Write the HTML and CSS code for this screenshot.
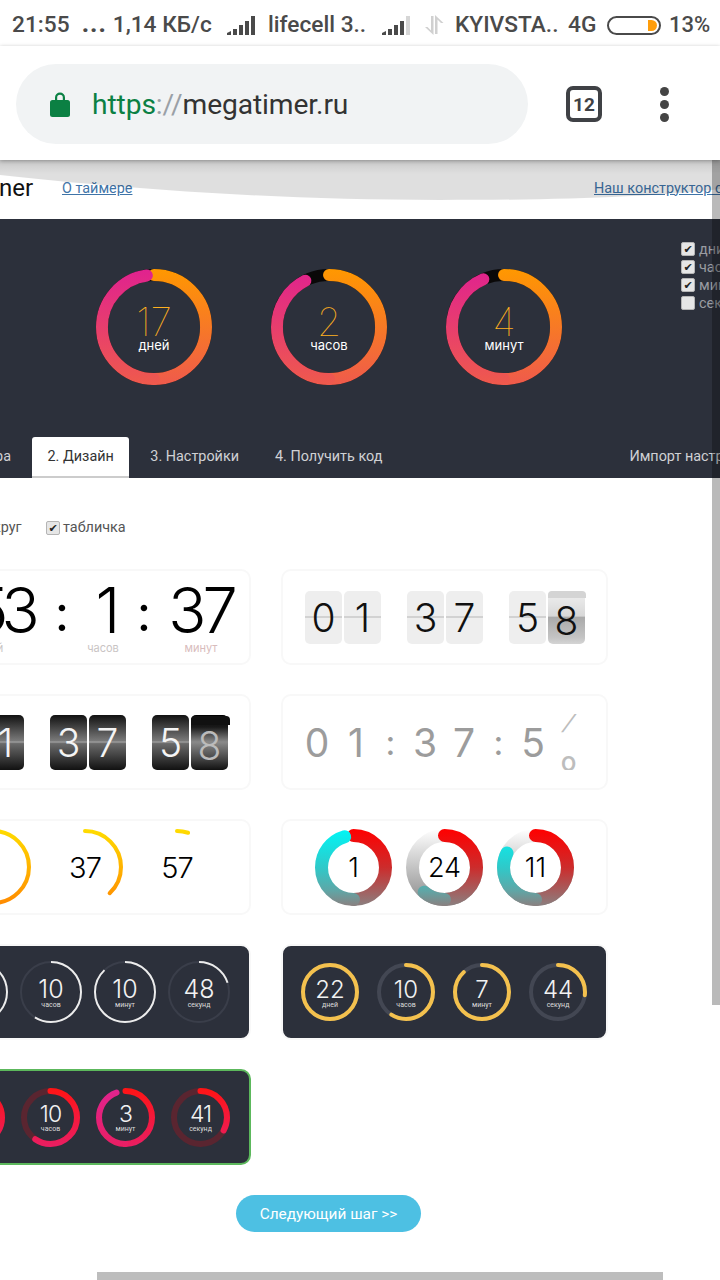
FILE: index.html
```html
<!DOCTYPE html>
<html lang="ru">
<head>
<meta charset="utf-8">
<title>megatimer.ru</title>
<link rel="stylesheet" href="styles.css">
</head>
<body>
<svg class="defs" width="0" height="0" aria-hidden="true">
  <defs>
    <linearGradient id="heroR" gradientUnits="userSpaceOnUse" x1="100" y1="0" x2="0" y2="0"><stop offset="0" stop-color="#ff9800"/><stop offset="1" stop-color="#ef5a4c"/></linearGradient>
    <linearGradient id="heroL" gradientUnits="userSpaceOnUse" x1="100" y1="0" x2="0" y2="0"><stop offset="0" stop-color="#e0228f"/><stop offset="1" stop-color="#ef5a4c"/></linearGradient>
    <linearGradient id="yellow" gradientUnits="userSpaceOnUse" x1="100" y1="0" x2="0" y2="0"><stop offset="0" stop-color="#ffdc00"/><stop offset="1" stop-color="#ff8a00"/></linearGradient>
    <linearGradient id="mixR" gradientUnits="userSpaceOnUse" x1="100" y1="0" x2="0" y2="0"><stop offset="0" stop-color="#ff0000"/><stop offset=".5" stop-color="#cc2c2c"/><stop offset="1" stop-color="#8a8080"/></linearGradient>
    <linearGradient id="mixL" gradientUnits="userSpaceOnUse" x1="100" y1="0" x2="0" y2="0"><stop offset="0" stop-color="#00f6f6"/><stop offset=".5" stop-color="#2fc9c9"/><stop offset=".8" stop-color="#5fa6a6"/><stop offset="1" stop-color="#8a8080"/></linearGradient>
    <linearGradient id="mixT" gradientUnits="userSpaceOnUse" x1="100" y1="0" x2="0" y2="0"><stop offset="0" stop-color="#ffffff"/><stop offset="1" stop-color="#888888"/></linearGradient>
    <linearGradient id="redR" gradientUnits="userSpaceOnUse" x1="100" y1="0" x2="0" y2="0"><stop offset="0" stop-color="#ff1414"/><stop offset="1" stop-color="#e91e63"/></linearGradient>
    <linearGradient id="redL" gradientUnits="userSpaceOnUse" x1="100" y1="0" x2="0" y2="0"><stop offset="0" stop-color="#e0248f"/><stop offset="1" stop-color="#e91e63"/></linearGradient>
  </defs>
</svg>

<div class="screen">
  <div class="statusbar">
    <span class="st st-time">21:55</span>
    <span class="st st-speed"><b class="st-dots">...</b> 1,14 КБ/с</span>
    <svg class="sig" viewBox="0 0 30 20"><path class="bar" d="M1 20v-2l4-2v4zM7 20v-6h4v6zM13 20v-10h4v10zM19 20v-14h4v14zM25 20v-19h4v19z"/></svg>
    <span class="st st-carrier">lifecell 3..</span>
    <svg class="sig" viewBox="0 0 30 20"><path class="bar" d="M1 20v-2l4-2v4zM7 20v-6h4v6zM13 20v-10h4v10zM19 20v-14h4v14z"/><path class="bar-off" d="M25 20v-19h4v19z"/></svg>
    <svg class="arrows" viewBox="0 0 22 20"><path d="M8 1h2.500v19L2 12h2.500l3.500 3.500zM12 0l8.500 8H18l-3.500-3.500V19H12z"/></svg>
    <span class="st st-kyiv">KYIVSTA..</span>
    <span class="st st-net">4G</span>
    <div class="battery"><span class="battery-level"></span></div>
    <span class="st st-pct">13%</span>
  </div>

  <div class="toolbar">
    <div class="omnibox">
      <svg class="lock" viewBox="0 0 20 26"><path d="M5 10V6.500a5 5 0 0 1 10 0V10h-2.200V6.500a2.800 2.800 0 0 0-5.600 0V10z"/><rect y="9" width="20" height="17" rx="2.500"/></svg>
      <span class="url"><span class="url-https">https</span><span class="url-sep">://</span>megatimer.ru</span>
    </div>
    <div class="tabs-count">12</div>
    <div class="menu"><i></i><i></i><i></i></div>
  </div>

  <div class="page">
    <header class="site-head">
      <span class="logo">ner</span>
      <a class="link link-about">О таймере</a>
      <a class="link link-builder">Наш конструктор счётчиков</a>
    </header>

    <section class="hero">
      <div class="hero-row">
        <div class="ring ring-hero">
          <svg viewBox="0 0 100 100"><circle class="sw-hero" r="44.850" cx="50" cy="50" pathLength="100" stroke="#0a0808"/><circle class="sw-hero arc" r="44.850" cx="50" cy="50" pathLength="100" stroke="url(#heroR)" stroke-dasharray="50 100"/><circle class="sw-hero arc" r="44.850" cx="50" cy="50" pathLength="100" stroke="url(#heroL)" stroke-dasharray="47.800 100" stroke-dashoffset="-50"/></svg>
          <div class="ring-text"><b class="hero-num">17</b><small class="hero-lab">дней</small></div>
        </div>
        <div class="ring ring-hero">
          <svg viewBox="0 0 100 100"><circle class="sw-hero" r="44.850" cx="50" cy="50" pathLength="100" stroke="#0a0808"/><circle class="sw-hero arc" r="44.850" cx="50" cy="50" pathLength="100" stroke="url(#heroR)" stroke-dasharray="50 100"/><circle class="sw-hero arc" r="44.850" cx="50" cy="50" pathLength="100" stroke="url(#heroL)" stroke-dasharray="42.500 100" stroke-dashoffset="-50"/></svg>
          <div class="ring-text"><b class="hero-num">2</b><small class="hero-lab">часов</small></div>
        </div>
        <div class="ring ring-hero">
          <svg viewBox="0 0 100 100"><circle class="sw-hero" r="44.850" cx="50" cy="50" pathLength="100" stroke="#0a0808"/><circle class="sw-hero arc" r="44.850" cx="50" cy="50" pathLength="100" stroke="url(#heroR)" stroke-dasharray="50 100"/><circle class="sw-hero arc" r="44.850" cx="50" cy="50" pathLength="100" stroke="url(#heroL)" stroke-dasharray="43.500 100" stroke-dashoffset="-50"/></svg>
          <div class="ring-text"><b class="hero-num">4</b><small class="hero-lab">минут</small></div>
        </div>
        <ul class="units">
          <li><span class="check on"></span>дни</li>
          <li><span class="check on"></span>часов</li>
          <li><span class="check on"></span>минут</li>
          <li><span class="check"></span>секунд</li>
        </ul>
      </div>
      <nav class="tabs">
        <span class="tab tab-first">1. Таймера</span>
        <span class="tab tab-active">2. Дизайн</span>
        <span class="tab">3. Настройки</span>
        <span class="tab">4. Получить код</span>
        <span class="tab tab-import">Импорт настроек</span>
      </nav>
    </section>

    <div class="options">
      <span class="opt-clipped">круг</span>
      <span class="check on check-light"></span><span>табличка</span>
    </div>

    <div class="cards">
      <div class="card card-digits">
        <div class="dg dg-first"><b>153</b><small>дней</small></div>
        <div class="dg-colon">:</div>
        <div class="dg dg-mid"><b>1</b><small>часов</small></div>
        <div class="dg-colon">:</div>
        <div class="dg dg-end"><b>37</b><small class="dg-pink">минут</small></div>
      </div>

      <div class="card card-flip flip-light">
        <div class="flip-group"><span class="tile">0</span><span class="tile">1</span></div>
        <div class="flip-group"><span class="tile">3</span><span class="tile">7</span></div>
        <div class="flip-group"><span class="tile">5</span><span class="tile tile-turn">8</span></div>
      </div>

      <div class="card card-flip flip-dark">
        <div class="flip-group"><span class="tile">0</span><span class="tile">1</span></div>
        <div class="flip-group"><span class="tile">3</span><span class="tile">7</span></div>
        <div class="flip-group"><span class="tile">5</span><span class="tile tile-turn">8</span></div>
      </div>

      <div class="card card-grey">
        <span class="gd">0</span><span class="gd">1</span><span class="gc">:</span>
        <span class="gd">3</span><span class="gd">7</span><span class="gc">:</span>
        <span class="gd">5</span>
        <span class="gd gd-roll"><i class="roll-top">/</i><i class="roll-bottom">o</i></span>
      </div>

      <div class="card card-rings card-yellow">
        <div class="ring ring-yellow">
          <svg viewBox="0 0 100 100"><circle class="sw-yellow arc" r="47.350" cx="50" cy="50" pathLength="100" stroke="url(#yellow)" stroke-dasharray="70 100"/></svg>
          <div class="ring-text"><b class="n-yellow">1</b></div>
        </div>
        <div class="ring ring-yellow">
          <svg viewBox="0 0 100 100"><circle class="sw-yellow arc" r="47.350" cx="50" cy="50" pathLength="100" stroke="url(#yellow)" stroke-dasharray="38 100"/></svg>
          <div class="ring-text"><b class="n-yellow">37</b></div>
        </div>
        <div class="ring ring-yellow">
          <svg viewBox="0 0 100 100"><circle class="sw-yellow arc" r="47.350" cx="50" cy="50" pathLength="100" stroke="url(#yellow)" stroke-dasharray="5 100"/></svg>
          <div class="ring-text"><b class="n-yellow">57</b></div>
        </div>
      </div>

      <div class="card card-rings card-mix">
        <div class="ring ring-mix">
          <svg viewBox="0 0 100 100"><circle class="sw-mix arc" r="41.550" cx="50" cy="50" pathLength="100" stroke="url(#mixR)" stroke-dasharray="50 100"/><circle class="sw-mix arc" r="41.550" cx="50" cy="50" pathLength="100" stroke="url(#mixL)" stroke-dasharray="45.500 100" stroke-dashoffset="-50"/></svg>
          <div class="ring-text"><b class="n-mix">1</b></div>
        </div>
        <div class="ring ring-mix">
          <svg viewBox="0 0 100 100"><circle class="sw-mix" r="41.550" cx="50" cy="50" pathLength="100" stroke="url(#mixT)"/><circle class="sw-mix arc" r="41.550" cx="50" cy="50" pathLength="100" stroke="url(#mixR)" stroke-dasharray="50 100"/><circle class="sw-mix arc" r="41.550" cx="50" cy="50" pathLength="100" stroke="url(#mixL)" stroke-dasharray="11 100" stroke-dashoffset="-50"/></svg>
          <div class="ring-text"><b class="n-mix">24</b></div>
        </div>
        <div class="ring ring-mix">
          <svg viewBox="0 0 100 100"><circle class="sw-mix" r="41.550" cx="50" cy="50" pathLength="100" stroke="url(#mixT)"/><circle class="sw-mix arc" r="41.550" cx="50" cy="50" pathLength="100" stroke="url(#mixR)" stroke-dasharray="50 100"/><circle class="sw-mix arc" r="41.550" cx="50" cy="50" pathLength="100" stroke="url(#mixL)" stroke-dasharray="32.500 100" stroke-dashoffset="-50"/></svg>
          <div class="ring-text"><b class="n-mix">11</b></div>
        </div>
      </div>

      <div class="card card-dark card-white">
        <div class="ring ring-thin">
          <svg viewBox="0 0 100 100"><circle class="sw-thin track-white" r="48.400" cx="50" cy="50" pathLength="100"/><circle class="sw-thin arc-white" r="48.400" cx="50" cy="50" pathLength="100" stroke-dasharray="37 100"/></svg>
          <div class="ring-text"><b class="n-thin">22</b><small class="l-dark">дней</small></div>
        </div>
        <div class="ring ring-thin">
          <svg viewBox="0 0 100 100"><circle class="sw-thin track-white" r="48.400" cx="50" cy="50" pathLength="100"/><circle class="sw-thin arc-white" r="48.400" cx="50" cy="50" pathLength="100" stroke-dasharray="59 100"/></svg>
          <div class="ring-text"><b class="n-thin">10</b><small class="l-dark">часов</small></div>
        </div>
        <div class="ring ring-thin">
          <svg viewBox="0 0 100 100"><circle class="sw-thin track-white" r="48.400" cx="50" cy="50" pathLength="100"/><circle class="sw-thin arc-white" r="48.400" cx="50" cy="50" pathLength="100" stroke-dasharray="88 100"/></svg>
          <div class="ring-text"><b class="n-thin">10</b><small class="l-dark">минут</small></div>
        </div>
        <div class="ring ring-thin">
          <svg viewBox="0 0 100 100"><circle class="sw-thin track-white" r="48.400" cx="50" cy="50" pathLength="100"/><circle class="sw-thin arc-white" r="48.400" cx="50" cy="50" pathLength="100" stroke-dasharray="20 100"/></svg>
          <div class="ring-text"><b class="n-thin">48</b><small class="l-dark">секунд</small></div>
        </div>
      </div>

      <div class="card card-dark card-gold">
        <div class="ring ring-gold">
          <svg viewBox="0 0 100 100"><circle class="sw-gold track-gold" r="46.550" cx="50" cy="50" pathLength="100"/><circle class="sw-gold arc arc-gold" r="46.550" cx="50" cy="50" pathLength="100"/></svg>
          <div class="ring-text"><b class="n-gold">22</b><small class="l-dark">дней</small></div>
        </div>
        <div class="ring ring-gold">
          <svg viewBox="0 0 100 100"><circle class="sw-gold track-gold" r="46.550" cx="50" cy="50" pathLength="100"/><circle class="sw-gold arc arc-gold" r="46.550" cx="50" cy="50" pathLength="100" stroke-dasharray="59 100"/></svg>
          <div class="ring-text"><b class="n-gold">10</b><small class="l-dark">часов</small></div>
        </div>
        <div class="ring ring-gold">
          <svg viewBox="0 0 100 100"><circle class="sw-gold track-gold" r="46.550" cx="50" cy="50" pathLength="100"/><circle class="sw-gold arc arc-gold" r="46.550" cx="50" cy="50" pathLength="100" stroke-dasharray="88 100"/></svg>
          <div class="ring-text"><b class="n-gold">7</b><small class="l-dark">минут</small></div>
        </div>
        <div class="ring ring-gold">
          <svg viewBox="0 0 100 100"><circle class="sw-gold track-gold" r="46.550" cx="50" cy="50" pathLength="100"/><circle class="sw-gold arc arc-gold" r="46.550" cx="50" cy="50" pathLength="100" stroke-dasharray="27 100"/></svg>
          <div class="ring-text"><b class="n-gold">44</b><small class="l-dark">секунд</small></div>
        </div>
      </div>

      <div class="card card-dark card-red">
        <div class="ring ring-red">
          <svg viewBox="0 0 100 100"><circle class="sw-red track-red" r="44.900" cx="50" cy="50" pathLength="100"/><circle class="sw-red arc" r="44.900" cx="50" cy="50" pathLength="100" stroke="url(#redR)" stroke-dasharray="50 100"/></svg>
          <div class="ring-text"><b class="n-red">22</b><small class="l-red">дней</small></div>
        </div>
        <div class="ring ring-red">
          <svg viewBox="0 0 100 100"><circle class="sw-red track-red" r="44.900" cx="50" cy="50" pathLength="100"/><circle class="sw-red arc" r="44.900" cx="50" cy="50" pathLength="100" stroke="url(#redR)" stroke-dasharray="59.500 100"/></svg>
          <div class="ring-text"><b class="n-red">10</b><small class="l-red">часов</small></div>
        </div>
        <div class="ring ring-red">
          <svg viewBox="0 0 100 100"><circle class="sw-red arc" r="44.900" cx="50" cy="50" pathLength="100" stroke="url(#redR)" stroke-dasharray="50 100"/><circle class="sw-red arc" r="44.900" cx="50" cy="50" pathLength="100" stroke="url(#redL)" stroke-dasharray="44 100" stroke-dashoffset="-50"/></svg>
          <div class="ring-text"><b class="n-red">3</b><small class="l-red">минут</small></div>
        </div>
        <div class="ring ring-red">
          <svg viewBox="0 0 100 100"><circle class="sw-red track-red" r="44.900" cx="50" cy="50" pathLength="100"/><circle class="sw-red arc" r="44.900" cx="50" cy="50" pathLength="100" stroke="url(#redR)" stroke-dasharray="33 100"/></svg>
          <div class="ring-text"><b class="n-red">41</b><small class="l-red">секунд</small></div>
        </div>
      </div>
    </div>

    <div class="actions"><button class="next">Следующий шаг &gt;&gt;</button></div>

    <svg class="glow" viewBox="0 0 720 40" preserveAspectRatio="none"><path d="M0 15C120 28 270 40 440 40C560 40 650 37 720 29V0H0z"/></svg>
    <div class="glow-shade"></div>
    <div class="scroll-v"></div>
    <div class="scroll-h"></div>
  </div>
</div>
</body>
</html>
```

FILE: styles.css
```css
* { box-sizing: border-box; }
html, body { margin: 0; padding: 0; background: #fff; }
body { font-family: "Roboto", "Liberation Sans", sans-serif; }
.defs { position: absolute; }

.screen { width: 720px; height: 1280px; overflow: hidden; display: flex; flex-direction: column; }

/* status bar */
.statusbar { height: 46px; flex: none; padding: 4px 0 0 12px; display: flex; align-items: center; background: #fff; color: #4a4a4a; white-space: nowrap; }
.st { font-size: 22.700px; font-weight: 500; line-height: 1; flex: none; }
.st-time { width: 70px; }
.st-speed { width: 144px; }
.st-dots { font-weight: 900; letter-spacing: 1.500px; }
.sig { width: 30px; height: 20px; margin-right: 12px; flex: none; }
.bar { fill: #4a4a4a; }
.bar-off { fill: #d6d6d6; }
.st-carrier { width: 113px; }
.arrows { width: 22px; height: 20px; margin-right: 10px; fill: #d0d0d0; flex: none; }
.st-kyiv { width: 113px; }
.st-net { width: 39px; }
.battery { width: 54px; height: 19px; margin-right: 8px; border: 2px solid #4a4a4a; border-radius: 10px; display: flex; justify-content: flex-end; padding: 2px; flex: none; }
.battery-level { width: 9px; background: #ff9d0a; border-radius: 0 7px 7px 0; }
.st-pct { font-size: 22px; }

/* browser toolbar */
.toolbar { height: 114px; flex: none; display: flex; align-items: center; padding: 2px 0 0 16px; background: #fff; position: relative; z-index: 3; box-shadow: 0 1px 4px rgba(0,0,0,.3); }
.omnibox { width: 512px; height: 80px; border-radius: 40px; background: #f1f3f4; display: flex; align-items: center; padding-left: 34px; flex: none; }
.lock { width: 20px; height: 26px; fill: #0b8043; margin-right: 22px; flex: none; }
.url { font-size: 28.200px; color: #333; letter-spacing: -.1px; padding-top: 1px; }
.url-https { color: #0b8043; }
.url-sep { color: #9aa0a6; }
.tabs-count { width: 36px; height: 36px; margin-left: 38px; border: 4px solid #3f4145; border-radius: 7px; display: flex; align-items: center; justify-content: center; font-size: 19px; font-weight: 700; color: #3f4145; flex: none; }
.menu { margin-left: 58px; display: flex; flex-direction: column; gap: 4px; flex: none; }
.menu i { width: 9px; height: 9px; border-radius: 50%; background: #444; display: block; }

/* page */
.page { flex: 1; position: relative; overflow: hidden; background: #fff; }
.site-head { height: 59px; display: flex; align-items: center; padding-bottom: 3px; white-space: nowrap; }
.logo { font-size: 24px; color: #111; margin-left: -1px; width: 63px; flex: none; }
.link { font-size: 14.400px; color: #3f74a8; text-decoration: underline; flex: none; }
.link-about { width: 532px; }

.hero { height: 259px; background: #2c303b; display: flex; flex-direction: column; }
.hero-row { height: 218px; padding: 21px 0 0 96px; display: flex; gap: 59px; align-items: flex-start; white-space: nowrap; }
.ring { position: relative; flex: none; }
.ring svg { display: block; width: 100%; height: 100%; overflow: visible; }
.ring circle { fill: none; }
.ring svg circle { transform: rotate(-90deg); transform-origin: 50px 50px; }
.arc { stroke-linecap: round; }
.ring-text { position: absolute; inset: 0; display: flex; flex-direction: column; align-items: center; justify-content: center; }
.ring-text b, .ring-text small { display: block; line-height: 1; font-weight: 400; }

.ring-hero { width: 116px; height: 116px; margin-top: 29px; }
.sw-hero { stroke-width: 10.300; }
.ring-text .hero-num { font-family: "Inter", sans-serif; font-size: 39px; font-weight: 100; color: #ffb020; }
.hero-lab { font-family: "Inter", sans-serif; font-size: 13px; color: #fff; margin-top: -2px; }

.units { list-style: none; margin: 0 0 0 60px; padding: 0; font-size: 14.400px; color: #9a9ca2; display: flex; flex-direction: column; flex: none; }
.units li { height: 18px; display: flex; align-items: center; gap: 4px; }
.check { width: 14px; height: 14px; flex: none; border-radius: 2px; background: #e6e6e6; border: 1px solid #b5b5b5; display: inline-flex; align-items: center; justify-content: center; font-size: 11px; color: #222; line-height: 1; }
.check.on::before { content: "✔"; font-family: "DejaVu Sans", sans-serif; }

.tabs { height: 41px; display: flex; gap: 6px; font-size: 14.400px; color: #d0d1d4; white-space: nowrap; }
.tab { padding: 0 15px; line-height: 39px; flex: none; }
.tab-first { width: 100px; margin-left: -74px; padding: 0 15px 0 0; text-align: right; overflow: hidden; }
.tab-active { background: #fff; color: #333; border-radius: 3px 3px 0 0; border-bottom: 2px solid #ccc; padding: 0 15.500px; }
.tab-import { margin-left: 211px; }

.options { height: 91px; padding-top: 41px; display: flex; align-items: flex-start; font-size: 14.400px; line-height: 18px; color: #555; gap: 3px; white-space: nowrap; }
.opt-clipped { margin-left: -7px; width: 50px; flex: none; }
.check-light { margin-top: 2px; }

/* cards */
.cards { margin-left: -76px; display: grid; grid-template-columns: 327px 327px; grid-auto-rows: 96px; column-gap: 30px; row-gap: 29px; }
.card { border: 2px solid #f8f8f8; border-radius: 10px; background: #fff; display: flex; align-items: center; }

.card-digits { padding-left: 8px; align-items: flex-start; padding-top: 8px; color: #000; font-family: "Inter", sans-serif; }
.dg { width: 112px; text-align: center; display: flex; flex-direction: column; align-items: center; flex: none; white-space: nowrap; }
.dg-mid { width: 50px; }
.dg-end { width: 82px; }
.dg b { font-size: 63px; font-weight: 300; line-height: 62px; letter-spacing: -4px; }
.dg-first b { letter-spacing: -7px; margin-left: 6px; }
.dg-mid b { padding-left: 6px; }
.dg small { font-size: 11px; color: #c9c4c4; line-height: 13px; margin-top: 1px; }
.dg small.dg-pink { color: #d8bcbc; }
.dg-colon { width: 32px; text-align: center; font-size: 50px; font-weight: 400; line-height: 68px; flex: none; }

.card-flip { padding-left: 22px; gap: 26px; font-family: "Inter", sans-serif; }
.flip-group { display: flex; gap: 2px; flex: none; }
.tile { width: 37px; height: 53px; border-radius: 5px; display: flex; align-items: center; justify-content: center; font-size: 39px; font-weight: 300; position: relative; }
.flip-light .tile { background: linear-gradient(#eee 0 47%, #d2d2d2 47% 51%, #eee 51%); color: #111; }
.flip-light .tile-turn { background: linear-gradient(#eaeaea 12%, #d8d8d8 47%, #aaa 50%, #c4c4c4 88%, #d4d4d4 100%); padding-top: 7px; }
.flip-light .tile-turn::before { content: ""; position: absolute; left: 0; right: -1px; top: 0; height: 7px; background: #d4d4d4; border-radius: 4px 4px 0 0; }
.flip-dark .tile { height: 55px; background: linear-gradient(#111 0, #7a7a7a 47%, #a0a0a0 49%, #6a6a6a 52%, #111 100%); color: #f4f4f4; }
.flip-dark .tile-turn { background: linear-gradient(#000 0, #1a1a1a 22%, #8a8a8a 49%, #444 80%, #111 100%); color: #bbb; padding-top: 6px; }
.flip-dark .tile-turn::before { content: ""; position: absolute; left: 0; right: -2px; top: 1px; height: 9px; background: #111; border-radius: 4px 4px 0 0; }

.card-grey { padding-left: 14.500px; font-family: "Inter", sans-serif; color: #9c9c9c; }
.gd { width: 39px; text-align: center; font-size: 39px; font-weight: 400; flex: none; }
.gc { width: 30px; text-align: center; font-size: 34px; font-weight: 400; flex: none; }
.gd-roll { height: 56px; padding-right: 7px; display: flex; flex-direction: column; align-items: center; justify-content: space-between; color: #bdbdbd; overflow: hidden; }
.gd-roll i { font-style: normal; display: block; font-weight: 500; }
.roll-top { font-size: 21px; line-height: 18px; transform: skewX(-25deg); }
.roll-bottom { font-size: 26px; line-height: 12px; height: 14px; }

.card-rings { display: flex; }
.card-yellow { padding-left: 29px; gap: 16px; }
.ring-yellow { width: 76px; height: 76px; }
.sw-yellow { stroke-width: 5.300; }
.ring-text .n-yellow { font-family: "Inter", sans-serif; font-size: 29px; font-weight: 300; color: #000; letter-spacing: -1px; }

.card-mix { padding-left: 32px; gap: 14px; }
.ring-mix { width: 77px; height: 77px; }
.sw-mix { stroke-width: 16.900; }
.ring-text .n-mix { font-family: "Inter", sans-serif; font-size: 27px; font-weight: 300; color: #000; }

.card-dark { background: #2c303b; }
.card-white { padding-left: 20px; gap: 12px; }
.ring-thin { width: 62px; height: 62px; }
.sw-thin { stroke-width: 3.200; }
.track-white { stroke: #3a3e4a; }
.arc-white { stroke: #ececec; }
.ring-text .n-thin { font-family: "Inter", sans-serif; font-size: 25px; font-weight: 300; color: #f2f2f2; margin-top: 2px; }
.l-dark { font-size: 7px; color: #ddd; }

.card-gold { padding-left: 18px; gap: 18px; }
.ring-gold { width: 58px; height: 58px; }
.sw-gold { stroke-width: 6.900; }
.track-gold { stroke: #434753; }
.arc-gold { stroke: #f4c14e; }
.ring-text .n-gold { font-family: "Inter", sans-serif; font-size: 24px; font-weight: 300; color: #f2f2f2; margin-top: 2px; }

.card-red { border-color: #5cb85c; padding-left: 20px; gap: 16px; }
.ring-red { width: 59px; height: 59px; }
.sw-red { stroke-width: 10.200; }
.track-red { stroke: #5a2530; }
.ring-text .n-red { font-family: "Inter", sans-serif; font-size: 23px; font-weight: 300; color: #f2f2f2; margin-top: 2px; letter-spacing: -1px; }
.l-red { font-size: 7px; color: #ddd; }

.actions { padding-top: 30px; padding-left: 236px; }
.next { width: 185px; height: 37px; border: 0; border-radius: 19px; background: #4dc0e3; color: #fff; font: 400 15.400px "Roboto", sans-serif; display: block; }

/* overlays: overscroll glow and scrollbars */
.glow { position: absolute; left: 0; top: 0; width: 720px; height: 40px; }
.glow path { fill: rgba(0,0,0,.125); }
.glow-shade { position: absolute; left: 0; top: 0; width: 720px; height: 14px; background: linear-gradient(rgba(0,0,0,.1), rgba(0,0,0,0)); }
.scroll-v { position: absolute; right: 0; top: 0; width: 8px; height: 845px; background: rgba(0,0,0,.27); }
.scroll-h { position: absolute; left: 97px; bottom: 0; width: 566px; height: 8px; background: #bdbdbd; }
```
